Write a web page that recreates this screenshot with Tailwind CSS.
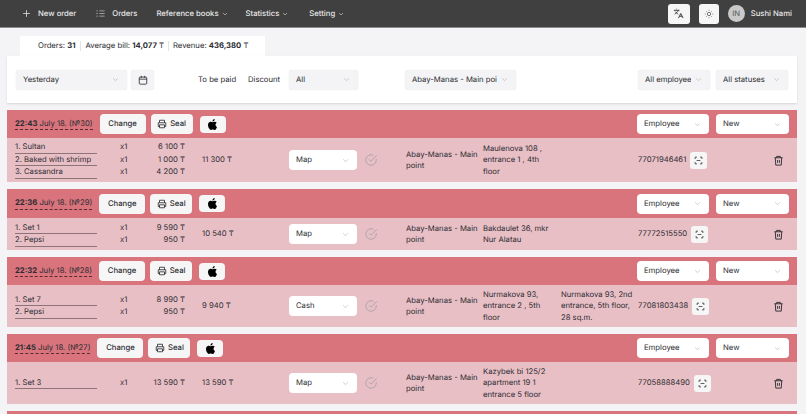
<!DOCTYPE html>
<html><head><meta charset="utf-8"><script src="https://cdn.jsdelivr.net/npm/@tailwindcss/browser@4"></script></head>
<body class="m-0 h-[414px] w-[806px] overflow-hidden bg-[#f4f4f7] font-['Inter','DejaVu_Sans',sans-serif] text-[7.7px] leading-[11.5px] text-[#2b2c31] [text-rendering:geometricPrecision]">
<header class="flex h-[28px] items-center border-b border-[#8a8a8a] bg-[#404040] pl-[22px] pr-[14px] text-[#e8e8e8] font-medium">
  <svg class="mr-[7px] h-[9px] w-[9px]" viewBox="0 0 24 24" fill="none" stroke="currentColor" stroke-width="2"><path d="M12 3v18M3 12h18"/></svg>
  <span>New order</span>
  <svg class="ml-[20px] mr-[7px] h-[9px] w-[9px] text-[#bbb]" viewBox="0 0 24 24" fill="none" stroke="currentColor" stroke-width="2"><path d="M9 5h14M9 12h14M9 19h14M1 5h4M1 12h4M1 19h4"/></svg>
  <span>Orders</span>
  <span class="ml-[19px]">Reference books</span>
  <svg class="ml-[3px] h-[6px] w-[6px] text-[#bbb]" viewBox="0 0 24 24" fill="none" stroke="currentColor" stroke-width="3"><path d="m4 8 8 8 8-8"/></svg>
  <span class="ml-[18px]">Statistics</span>
  <svg class="ml-[3px] h-[6px] w-[6px] text-[#bbb]" viewBox="0 0 24 24" fill="none" stroke="currentColor" stroke-width="3"><path d="m4 8 8 8 8-8"/></svg>
  <span class="ml-[21px]">Setting</span>
  <svg class="ml-[3px] h-[6px] w-[6px] text-[#bbb]" viewBox="0 0 24 24" fill="none" stroke="currentColor" stroke-width="3"><path d="m4 8 8 8 8-8"/></svg>
  <div class="ml-auto flex h-[20px] w-[22px] items-center justify-center rounded-[3px] bg-[#f6f6f6] text-[#333]">
    <svg class="h-[11px] w-[11px]" viewBox="0 0 24 24" fill="none" stroke="currentColor" stroke-width="2"><path d="m5 8 6 6M4 14l6-6 2-3M2 5h12M7 2h1M22 22l-5-10-5 10M14 18h6"/></svg>
  </div>
  <div class="ml-[9px] flex h-[20px] w-[20px] items-center justify-center rounded-[3px] bg-[#f6f6f6] text-[#444]">
    <svg class="h-[10px] w-[10px]" viewBox="0 0 24 24" fill="none" stroke="currentColor" stroke-width="1.7"><circle cx="12" cy="12" r="4"/><path d="M12 2v2M12 20v2M4.9 4.9l1.4 1.4M17.7 17.7l1.4 1.4M2 12h2M20 12h2M6.3 17.7l-1.4 1.4M19.1 4.9l-1.4 1.4"/></svg>
  </div>
  <div class="ml-[9px] flex h-[17px] w-[17px] items-center justify-center rounded-full bg-[#c9c9c9] font-normal text-[#555]">IN</div>
  <span class="ml-[6px]">Sushi Nami</span>
</header>

<section class="ml-[20px] mt-[8px] flex h-[20px] w-[245px] items-center whitespace-nowrap bg-white pl-[18px]">
  <span class="pr-[5px]">Orders: <b class="font-bold">31</b></span>
  <span class="h-[10px] w-px bg-[#e3e3e3]"></span>
  <span class="px-[4px]">Average bill: <b class="font-bold">14,077</b> ₸</span>
  <span class="h-[10px] w-px bg-[#e3e3e3]"></span>
  <span class="pl-[4px]">Revenue: <b class="font-bold">436,380</b> ₸</span>
</section>

<section class="ml-[7px] flex h-[47px] w-[790px] items-center bg-white pl-[9px] shadow-[0_1px_2px_rgba(0,0,0,0.12)]">
  <div class="flex h-[20px] w-[111px] items-center justify-between rounded-[4px] bg-[#f4f4f6] pl-[7px] pr-[8px] shadow-[0_0_1px_rgba(0,0,0,0.2)]"><span>Yesterday</span><svg class="h-[7px] w-[7px] text-[#aaa]" viewBox="0 0 24 24" fill="none" stroke="currentColor" stroke-width="2"><path d="m4 8 8 8 8-8"/></svg></div>
  <div class="ml-[4px] flex h-[20px] w-[23px] items-center justify-center rounded-[4px] bg-[#f4f4f6] shadow-[0_0_1px_rgba(0,0,0,0.2)]"><svg class="h-[10px] w-[10px]" viewBox="0 0 24 24" fill="none" stroke="currentColor" stroke-width="2"><rect x="3" y="5" width="18" height="17" rx="2"/><path d="M8 2v5M16 2v5M3 10h18"/></svg></div>
  <span class="ml-[44px] w-[50px] whitespace-nowrap">To be paid</span>
  <span class="w-[41px] whitespace-nowrap">Discount</span>
  <div class="flex h-[20px] w-[69px] items-center justify-between rounded-[4px] bg-[#f4f4f6] pl-[7px] pr-[8px] shadow-[0_0_1px_rgba(0,0,0,0.2)]"><span>All</span><svg class="h-[7px] w-[7px] text-[#aaa]" viewBox="0 0 24 24" fill="none" stroke="currentColor" stroke-width="2"><path d="m4 8 8 8 8-8"/></svg></div>
  <div class="ml-[47px] flex h-[20px] w-[111px] items-center justify-between rounded-[4px] bg-[#f4f4f6] pl-[7px] pr-[8px] shadow-[0_0_1px_rgba(0,0,0,0.2)]"><span class="w-[85px] overflow-hidden whitespace-nowrap">Abay-Manas - Main point</span><svg class="h-[7px] w-[7px] text-[#aaa]" viewBox="0 0 24 24" fill="none" stroke="currentColor" stroke-width="2"><path d="m4 8 8 8 8-8"/></svg></div>
  <div class="ml-[122px] flex h-[20px] w-[72px] items-center justify-between rounded-[4px] bg-[#f4f4f6] pl-[7px] pr-[8px] shadow-[0_0_1px_rgba(0,0,0,0.2)]"><span class="w-[46px] overflow-hidden whitespace-nowrap">All employees</span><svg class="h-[7px] w-[7px] text-[#aaa]" viewBox="0 0 24 24" fill="none" stroke="currentColor" stroke-width="2"><path d="m4 8 8 8 8-8"/></svg></div>
  <div class="ml-[6px] flex h-[20px] w-[72px] items-center justify-between rounded-[4px] bg-[#f4f4f6] pl-[7px] pr-[8px] shadow-[0_0_1px_rgba(0,0,0,0.2)]"><span class="whitespace-nowrap">All statuses</span><svg class="h-[7px] w-[7px] text-[#aaa]" viewBox="0 0 24 24" fill="none" stroke="currentColor" stroke-width="2"><path d="m4 8 8 8 8-8"/></svg></div>
</section>

<main class="ml-[7px] mt-[7px] flex w-[790px] flex-col gap-[7px]">

<!-- Order 30 -->
<article>
  <div class="flex h-[28px] items-center bg-[#d9747d] pl-[8px] pr-[8px]">
    <span class="whitespace-nowrap border-b border-dashed border-[#5a2a30]"><b class="font-bold">22:43</b> July 18. (№30)</span>
    <div class="ml-[7px] flex h-[20px] w-[46px] items-center justify-center rounded-[4px] bg-[#f6f6f6] font-medium">Change</div>
    <div class="ml-[5px] flex h-[20px] w-[42px] items-center justify-center gap-[3px] rounded-[4px] bg-[#f6f6f6] font-medium"><svg class="h-[10px] w-[10px]" viewBox="0 0 24 24" fill="none" stroke="currentColor" stroke-width="2"><path d="M6 9V3h12v6M6 18H3v-9h18v9h-3M6 14h12v7H6z"/></svg>Seal</div>
    <div class="ml-[7px] flex h-[17px] w-[26px] items-center justify-center rounded-[4px] bg-[#f6f6f6]"><svg class="h-[11px] w-[11px]" viewBox="0 0 24 24" fill="#000"><path d="M12.152 6.896c-.948 0-2.415-1.078-3.96-1.04-2.04.027-3.91 1.183-4.961 3.014-2.117 3.675-.546 9.103 1.519 12.09 1.013 1.454 2.208 3.09 3.792 3.039 1.52-.065 2.09-.987 3.935-.987 1.831 0 2.35.987 3.96.948 1.637-.026 2.676-1.48 3.676-2.948 1.156-1.688 1.636-3.325 1.662-3.415-.039-.013-3.182-1.221-3.22-4.857-.026-3.04 2.48-4.494 2.597-4.559-1.429-2.09-3.623-2.324-4.39-2.376-2-.156-3.675 1.09-4.61 1.09zM15.53 3.83c.843-1.012 1.4-2.427 1.245-3.83-1.207.052-2.662.805-3.532 1.818-.78.896-1.454 2.338-1.273 3.714 1.338.104 2.715-.688 3.559-1.701"/></svg></div>
    <div class="ml-auto flex h-[20px] w-[72px] items-center justify-between rounded-[4px] bg-white pl-[7px] pr-[8px]"><span>Employee</span><svg class="h-[7px] w-[7px] text-[#aaa]" viewBox="0 0 24 24" fill="none" stroke="currentColor" stroke-width="2"><path d="m4 8 8 8 8-8"/></svg></div>
    <div class="ml-[7px] flex h-[20px] w-[73px] items-center justify-between rounded-[4px] bg-white pl-[7px] pr-[8px]"><span>New</span><svg class="h-[7px] w-[7px] text-[#aaa]" viewBox="0 0 24 24" fill="none" stroke="currentColor" stroke-width="2"><path d="m4 8 8 8 8-8"/></svg></div>
  </div>
  <div class="grid h-[44px] grid-cols-[105px_30px_35px_104px_68px_49px_77px_155px_135px_auto] items-center bg-[#e9bfc6] pl-[8px]">
    <div class="col-span-3 grid grid-cols-[105px_30px_35px]">
      <span class="mr-[23px] whitespace-nowrap border-b border-[#8d7479]">1. Sultan</span><span>x1</span><span class="whitespace-nowrap text-right">6 100 ₸</span>
      <span class="mr-[23px] whitespace-nowrap border-b border-[#8d7479]">2. Baked with shrimp</span><span>x1</span><span class="whitespace-nowrap text-right">1 000 ₸</span>
      <span class="mr-[23px] whitespace-nowrap border-b border-[#8d7479]">3. Cassandra</span><span>x1</span><span class="whitespace-nowrap text-right">4 200 ₸</span>
    </div>
    <span class="pl-[17px]">11 300 ₸</span>
    <div class="flex h-[20px] items-center justify-between rounded-[4px] bg-white pl-[7px] pr-[8px]"><span>Map</span><svg class="h-[7px] w-[7px] text-[#aaa]" viewBox="0 0 24 24" fill="none" stroke="currentColor" stroke-width="2"><path d="m4 8 8 8 8-8"/></svg></div>
    <svg class="ml-[7px] h-[14px] w-[14px] text-[#a5a0a3]" viewBox="0 0 24 24" fill="none" stroke="currentColor" stroke-width="1.5"><path d="M21 10.5V12a9 9 0 1 1-5.3-8.2"/><path d="m9 11 3 3 10-10"/></svg>
    <span class="pr-[2px]">Abay-Manas - Main point</span>
    <span class="pr-[85px]">Maulenova 108 , entrance 1 , 4th floor</span>
    <div class="flex items-center gap-[4px]"><span>77071946461</span><div class="flex h-[17px] w-[17px] items-center justify-center rounded-[3px] bg-[#f6f6f6]"><svg class="h-[9px] w-[9px]" viewBox="0 0 24 24" fill="none" stroke="currentColor" stroke-width="2"><path d="M3 8V3h5M16 3h5v5M21 16v5h-5M8 21H3v-5M7 12h10"/></svg></div></div>
    <svg class="h-[11px] w-[11px]" viewBox="0 0 24 24" fill="none" stroke="currentColor" stroke-width="2"><path d="M3 6h18M8 6V3h8v3M5 6l1 16h12l1-16M10 11v6M14 11v6"/></svg>
  </div>
</article>

<!-- Order 29 -->
<article>
  <div class="flex h-[29px] items-center bg-[#d9747d] pl-[8px] pr-[8px]">
    <span class="whitespace-nowrap border-b border-dashed border-[#5a2a30]"><b class="font-bold">22:36</b> July 18. (№29)</span>
    <div class="ml-[7px] flex h-[20px] w-[46px] items-center justify-center rounded-[4px] bg-[#f6f6f6] font-medium">Change</div>
    <div class="ml-[5px] flex h-[20px] w-[42px] items-center justify-center gap-[3px] rounded-[4px] bg-[#f6f6f6] font-medium"><svg class="h-[10px] w-[10px]" viewBox="0 0 24 24" fill="none" stroke="currentColor" stroke-width="2"><path d="M6 9V3h12v6M6 18H3v-9h18v9h-3M6 14h12v7H6z"/></svg>Seal</div>
    <div class="ml-[7px] flex h-[17px] w-[26px] items-center justify-center rounded-[4px] bg-[#f6f6f6]"><svg class="h-[11px] w-[11px]" viewBox="0 0 24 24" fill="#000"><path d="M12.152 6.896c-.948 0-2.415-1.078-3.96-1.04-2.04.027-3.91 1.183-4.961 3.014-2.117 3.675-.546 9.103 1.519 12.09 1.013 1.454 2.208 3.09 3.792 3.039 1.52-.065 2.09-.987 3.935-.987 1.831 0 2.35.987 3.96.948 1.637-.026 2.676-1.48 3.676-2.948 1.156-1.688 1.636-3.325 1.662-3.415-.039-.013-3.182-1.221-3.22-4.857-.026-3.04 2.48-4.494 2.597-4.559-1.429-2.09-3.623-2.324-4.39-2.376-2-.156-3.675 1.09-4.61 1.09zM15.53 3.83c.843-1.012 1.4-2.427 1.245-3.83-1.207.052-2.662.805-3.532 1.818-.78.896-1.454 2.338-1.273 3.714 1.338.104 2.715-.688 3.559-1.701"/></svg></div>
    <div class="ml-auto flex h-[20px] w-[72px] items-center justify-between rounded-[4px] bg-white pl-[7px] pr-[8px]"><span>Employee</span><svg class="h-[7px] w-[7px] text-[#aaa]" viewBox="0 0 24 24" fill="none" stroke="currentColor" stroke-width="2"><path d="m4 8 8 8 8-8"/></svg></div>
    <div class="ml-[7px] flex h-[20px] w-[73px] items-center justify-between rounded-[4px] bg-white pl-[7px] pr-[8px]"><span>New</span><svg class="h-[7px] w-[7px] text-[#aaa]" viewBox="0 0 24 24" fill="none" stroke="currentColor" stroke-width="2"><path d="m4 8 8 8 8-8"/></svg></div>
  </div>
  <div class="grid h-[32px] grid-cols-[105px_30px_35px_104px_68px_49px_77px_155px_135px_auto] items-center bg-[#e9bfc6] pl-[8px]">
    <div class="col-span-3 grid grid-cols-[105px_30px_35px]">
      <span class="mr-[23px] whitespace-nowrap border-b border-[#8d7479]">1. Set 1</span><span>x1</span><span class="whitespace-nowrap text-right">9 590 ₸</span>
      <span class="mr-[23px] whitespace-nowrap border-b border-[#8d7479]">2. Pepsi</span><span>x1</span><span class="whitespace-nowrap text-right">950 ₸</span>
    </div>
    <span class="pl-[17px]">10 540 ₸</span>
    <div class="flex h-[20px] items-center justify-between rounded-[4px] bg-white pl-[7px] pr-[8px]"><span>Map</span><svg class="h-[7px] w-[7px] text-[#aaa]" viewBox="0 0 24 24" fill="none" stroke="currentColor" stroke-width="2"><path d="m4 8 8 8 8-8"/></svg></div>
    <svg class="ml-[7px] h-[14px] w-[14px] text-[#a5a0a3]" viewBox="0 0 24 24" fill="none" stroke="currentColor" stroke-width="1.5"><path d="M21 10.5V12a9 9 0 1 1-5.3-8.2"/><path d="m9 11 3 3 10-10"/></svg>
    <span class="pr-[2px]">Abay-Manas - Main point</span>
    <span class="pr-[85px]">Bakdaulet 36, mkr Nur Alatau</span>
    <div class="flex items-center gap-[4px]"><span>77772515550</span><div class="flex h-[17px] w-[17px] items-center justify-center rounded-[3px] bg-[#f6f6f6]"><svg class="h-[9px] w-[9px]" viewBox="0 0 24 24" fill="none" stroke="currentColor" stroke-width="2"><path d="M3 8V3h5M16 3h5v5M21 16v5h-5M8 21H3v-5M7 12h10"/></svg></div></div>
    <svg class="h-[11px] w-[11px]" viewBox="0 0 24 24" fill="none" stroke="currentColor" stroke-width="2"><path d="M3 6h18M8 6V3h8v3M5 6l1 16h12l1-16M10 11v6M14 11v6"/></svg>
  </div>
</article>

<!-- Order 28 -->
<article>
  <div class="flex h-[28px] items-center bg-[#d9747d] pl-[8px] pr-[8px]">
    <span class="whitespace-nowrap border-b border-dashed border-[#5a2a30]"><b class="font-bold">22:32</b> July 18. (№28)</span>
    <div class="ml-[7px] flex h-[20px] w-[46px] items-center justify-center rounded-[4px] bg-[#f6f6f6] font-medium">Change</div>
    <div class="ml-[5px] flex h-[20px] w-[42px] items-center justify-center gap-[3px] rounded-[4px] bg-[#f6f6f6] font-medium"><svg class="h-[10px] w-[10px]" viewBox="0 0 24 24" fill="none" stroke="currentColor" stroke-width="2"><path d="M6 9V3h12v6M6 18H3v-9h18v9h-3M6 14h12v7H6z"/></svg>Seal</div>
    <div class="ml-[7px] flex h-[17px] w-[26px] items-center justify-center rounded-[4px] bg-[#f6f6f6]"><svg class="h-[11px] w-[11px]" viewBox="0 0 24 24" fill="#000"><path d="M12.152 6.896c-.948 0-2.415-1.078-3.96-1.04-2.04.027-3.91 1.183-4.961 3.014-2.117 3.675-.546 9.103 1.519 12.09 1.013 1.454 2.208 3.09 3.792 3.039 1.52-.065 2.09-.987 3.935-.987 1.831 0 2.35.987 3.96.948 1.637-.026 2.676-1.48 3.676-2.948 1.156-1.688 1.636-3.325 1.662-3.415-.039-.013-3.182-1.221-3.22-4.857-.026-3.04 2.48-4.494 2.597-4.559-1.429-2.09-3.623-2.324-4.39-2.376-2-.156-3.675 1.09-4.61 1.09zM15.53 3.83c.843-1.012 1.4-2.427 1.245-3.83-1.207.052-2.662.805-3.532 1.818-.78.896-1.454 2.338-1.273 3.714 1.338.104 2.715-.688 3.559-1.701"/></svg></div>
    <div class="ml-auto flex h-[20px] w-[72px] items-center justify-between rounded-[4px] bg-white pl-[7px] pr-[8px]"><span>Employee</span><svg class="h-[7px] w-[7px] text-[#aaa]" viewBox="0 0 24 24" fill="none" stroke="currentColor" stroke-width="2"><path d="m4 8 8 8 8-8"/></svg></div>
    <div class="ml-[7px] flex h-[20px] w-[73px] items-center justify-between rounded-[4px] bg-white pl-[7px] pr-[8px]"><span>New</span><svg class="h-[7px] w-[7px] text-[#aaa]" viewBox="0 0 24 24" fill="none" stroke="currentColor" stroke-width="2"><path d="m4 8 8 8 8-8"/></svg></div>
  </div>
  <div class="grid h-[42px] grid-cols-[105px_30px_35px_104px_68px_49px_77px_78px_77px_135px_auto] items-center bg-[#e9bfc6] pl-[8px]">
    <div class="col-span-3 grid grid-cols-[105px_30px_35px]">
      <span class="mr-[23px] whitespace-nowrap border-b border-[#8d7479]">1. Set 7</span><span>x1</span><span class="whitespace-nowrap text-right">8 990 ₸</span>
      <span class="mr-[23px] whitespace-nowrap border-b border-[#8d7479]">2. Pepsi</span><span>x1</span><span class="whitespace-nowrap text-right">950 ₸</span>
    </div>
    <span class="pl-[17px]">9 940 ₸</span>
    <div class="flex h-[20px] items-center justify-between rounded-[4px] bg-white pl-[7px] pr-[8px]"><span>Cash</span><svg class="h-[7px] w-[7px] text-[#aaa]" viewBox="0 0 24 24" fill="none" stroke="currentColor" stroke-width="2"><path d="m4 8 8 8 8-8"/></svg></div>
    <svg class="ml-[7px] h-[14px] w-[14px] text-[#a5a0a3]" viewBox="0 0 24 24" fill="none" stroke="currentColor" stroke-width="1.5"><path d="M21 10.5V12a9 9 0 1 1-5.3-8.2"/><path d="m9 11 3 3 10-10"/></svg>
    <span class="pr-[2px]">Abay-Manas - Main point</span>
    <span class="pr-[8px]">Nurmakova 93, entrance 2 , 5th floor</span>
    <span class="pr-[4px]">Nurmakova 93, 2nd entrance, 5th floor, 28 sq.m.</span>
    <div class="flex items-center gap-[4px]"><span>77081803438</span><div class="flex h-[17px] w-[17px] items-center justify-center rounded-[3px] bg-[#f6f6f6]"><svg class="h-[9px] w-[9px]" viewBox="0 0 24 24" fill="none" stroke="currentColor" stroke-width="2"><path d="M3 8V3h5M16 3h5v5M21 16v5h-5M8 21H3v-5M7 12h10"/></svg></div></div>
    <svg class="h-[11px] w-[11px]" viewBox="0 0 24 24" fill="none" stroke="currentColor" stroke-width="2"><path d="M3 6h18M8 6V3h8v3M5 6l1 16h12l1-16M10 11v6M14 11v6"/></svg>
  </div>
</article>

<!-- Order 27 -->
<article>
  <div class="flex h-[28px] items-center bg-[#d9747d] pl-[8px] pr-[8px]">
    <span class="whitespace-nowrap border-b border-dashed border-[#5a2a30]"><b class="font-bold">21:45</b> July 18. (№27)</span>
    <div class="ml-[7px] flex h-[20px] w-[46px] items-center justify-center rounded-[4px] bg-[#f6f6f6] font-medium">Change</div>
    <div class="ml-[5px] flex h-[20px] w-[42px] items-center justify-center gap-[3px] rounded-[4px] bg-[#f6f6f6] font-medium"><svg class="h-[10px] w-[10px]" viewBox="0 0 24 24" fill="none" stroke="currentColor" stroke-width="2"><path d="M6 9V3h12v6M6 18H3v-9h18v9h-3M6 14h12v7H6z"/></svg>Seal</div>
    <div class="ml-[7px] flex h-[17px] w-[26px] items-center justify-center rounded-[4px] bg-[#f6f6f6]"><svg class="h-[11px] w-[11px]" viewBox="0 0 24 24" fill="#000"><path d="M12.152 6.896c-.948 0-2.415-1.078-3.96-1.04-2.04.027-3.91 1.183-4.961 3.014-2.117 3.675-.546 9.103 1.519 12.09 1.013 1.454 2.208 3.09 3.792 3.039 1.52-.065 2.09-.987 3.935-.987 1.831 0 2.35.987 3.96.948 1.637-.026 2.676-1.48 3.676-2.948 1.156-1.688 1.636-3.325 1.662-3.415-.039-.013-3.182-1.221-3.22-4.857-.026-3.04 2.48-4.494 2.597-4.559-1.429-2.09-3.623-2.324-4.39-2.376-2-.156-3.675 1.09-4.61 1.09zM15.53 3.83c.843-1.012 1.4-2.427 1.245-3.83-1.207.052-2.662.805-3.532 1.818-.78.896-1.454 2.338-1.273 3.714 1.338.104 2.715-.688 3.559-1.701"/></svg></div>
    <div class="ml-auto flex h-[20px] w-[72px] items-center justify-between rounded-[4px] bg-white pl-[7px] pr-[8px]"><span>Employee</span><svg class="h-[7px] w-[7px] text-[#aaa]" viewBox="0 0 24 24" fill="none" stroke="currentColor" stroke-width="2"><path d="m4 8 8 8 8-8"/></svg></div>
    <div class="ml-[7px] flex h-[20px] w-[73px] items-center justify-between rounded-[4px] bg-white pl-[7px] pr-[8px]"><span>New</span><svg class="h-[7px] w-[7px] text-[#aaa]" viewBox="0 0 24 24" fill="none" stroke="currentColor" stroke-width="2"><path d="m4 8 8 8 8-8"/></svg></div>
  </div>
  <div class="grid h-[42px] grid-cols-[105px_30px_35px_104px_68px_49px_77px_155px_135px_auto] items-center bg-[#e9bfc6] pl-[8px]">
    <div class="col-span-3 grid grid-cols-[105px_30px_35px]">
      <span class="mr-[23px] whitespace-nowrap border-b border-[#8d7479]">1. Set 3</span><span>x1</span><span class="whitespace-nowrap text-right">13 590 ₸</span>
    </div>
    <span class="pl-[17px]">13 590 ₸</span>
    <div class="flex h-[20px] items-center justify-between rounded-[4px] bg-white pl-[7px] pr-[8px]"><span>Map</span><svg class="h-[7px] w-[7px] text-[#aaa]" viewBox="0 0 24 24" fill="none" stroke="currentColor" stroke-width="2"><path d="m4 8 8 8 8-8"/></svg></div>
    <svg class="ml-[7px] h-[14px] w-[14px] text-[#a5a0a3]" viewBox="0 0 24 24" fill="none" stroke="currentColor" stroke-width="1.5"><path d="M21 10.5V12a9 9 0 1 1-5.3-8.2"/><path d="m9 11 3 3 10-10"/></svg>
    <span class="pr-[2px]">Abay-Manas - Main point</span>
    <span class="pr-[85px]">Kazybek bi 125/2 apartment 19 1 entrance 5 floor</span>
    <div class="flex items-center gap-[4px]"><span>77058888490</span><div class="flex h-[17px] w-[17px] items-center justify-center rounded-[3px] bg-[#f6f6f6]"><svg class="h-[9px] w-[9px]" viewBox="0 0 24 24" fill="none" stroke="currentColor" stroke-width="2"><path d="M3 8V3h5M16 3h5v5M21 16v5h-5M8 21H3v-5M7 12h10"/></svg></div></div>
    <svg class="h-[11px] w-[11px]" viewBox="0 0 24 24" fill="none" stroke="currentColor" stroke-width="2"><path d="M3 6h18M8 6V3h8v3M5 6l1 16h12l1-16M10 11v6M14 11v6"/></svg>
  </div>
</article>

<div class="h-[28px] bg-[#d9747d]"></div>
</main>
</body></html>
